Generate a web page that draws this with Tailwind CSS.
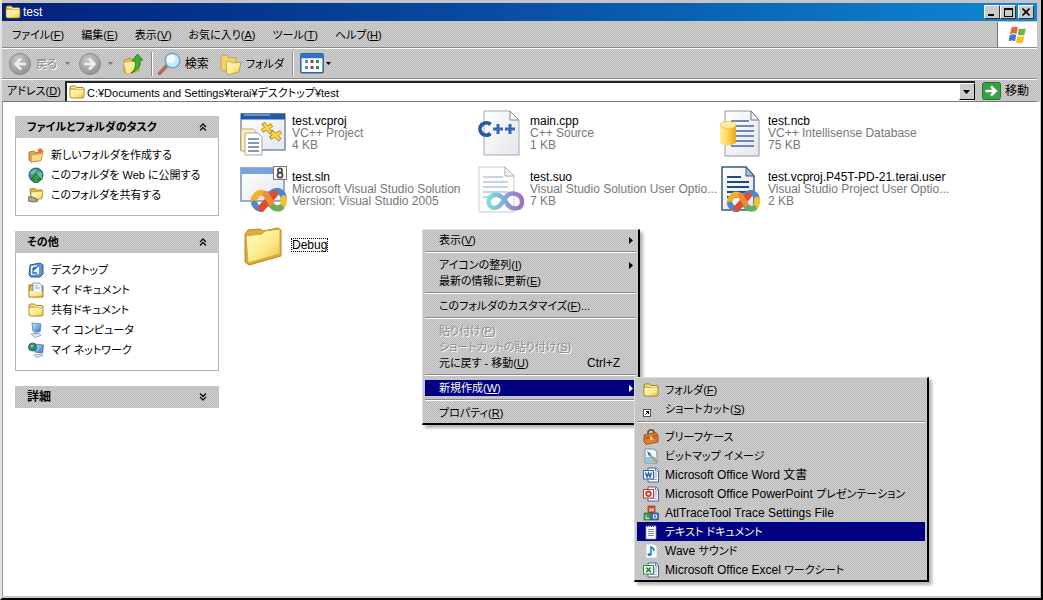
<!DOCTYPE html>
<html lang="ja">
<head>
<meta charset="utf-8">
<title>test</title>
<script src="https://cdn.jsdelivr.net/npm/@tailwindcss/browser@4"></script>
</head>
<body class="min-h-screen flex bg-white text-black text-[12px] leading-[12px] font-['Liberation_Sans','Noto_Sans_CJK_JP',sans-serif] [font-feature-settings:'palt']">

<svg class="absolute w-0 h-0" aria-hidden="true">
  <defs>
    <linearGradient id="gFolder" x1="0" y1="0" x2="1" y2="1"><stop offset="0" stop-color="#fffcc4"/><stop offset=".6" stop-color="#fbe888"/><stop offset="1" stop-color="#e9bf45"/></linearGradient>
    <linearGradient id="gBlue" x1="0" y1="0" x2="1" y2="1"><stop offset="0" stop-color="#d4ecff"/><stop offset="1" stop-color="#2a6fd0"/></linearGradient>
    <radialGradient id="gGrey" cx=".4" cy=".3" r=".8"><stop offset="0" stop-color="#c8c8c8"/><stop offset="1" stop-color="#8c8c8c"/></radialGradient>
    <linearGradient id="gSheet" x1="0" y1="0" x2="1" y2="1"><stop offset="0" stop-color="#ffffff"/><stop offset="1" stop-color="#e4e6ee"/></linearGradient>
    <linearGradient id="gDb" x1="0" y1="0" x2="1" y2="0"><stop offset="0" stop-color="#fff0a0"/><stop offset=".5" stop-color="#ffd44e"/><stop offset="1" stop-color="#e8a520"/></linearGradient>
    <linearGradient id="gInf" x1="0" y1="0" x2="1" y2="0"><stop offset="0" stop-color="#7fdcdc"/><stop offset=".5" stop-color="#84a4dc"/><stop offset="1" stop-color="#a070c0"/></linearGradient>
    <symbol id="folder" viewBox="0 0 16 16"><path d="M1 3.500 2 2h4.500l1.500 1.500h6l1 1V13l-1 1H2l-1-1z" fill="#e2ba45" stroke="#8a6a1c" stroke-width=".8"/><path d="M1.500 6h13v6.800l-.8.8H2.300l-.8-.8z" fill="url(#gFolder)"/><path d="M2 3.200h4l1.500 1.400H14" fill="none" stroke="#fff6b8" stroke-width="1"/></symbol>
    <symbol id="vslogo" viewBox="0 0 36 24"><g fill="none" stroke-width="6" stroke-linecap="round" stroke-linejoin="round"><path d="M15 6q-6-3-9 1-4 4-2 8" stroke="#f4b02c"/><path d="M19 6q6-5 10-2 3 2 3 6" stroke="#4c86d4"/><path d="M4 15q2 5 7 5" stroke="#4c86d4"/><path d="M32 10q1 6-3 9" stroke="#f1c232"/><path d="M29 19q-5 2-9-3" stroke="#68ac60"/><path d="m11 19 12-13" stroke="#e04c30" stroke-width="7"/><path d="m15 6 5 8" stroke="#f08a34"/></g></symbol>
    <symbol id="office" viewBox="0 0 16 16"><path d="M5 1h8l2.500 2.500V15H5z" fill="#fff" stroke="#46639c"/><path d="M12.500 1.500v2.500h2.500" fill="none" stroke="#46639c" stroke-width=".8"/><path d="M11 6h3M11 8h3M11 10h3M7 12.500h7" stroke="#8ba4cc"/><rect x=".5" y="3.500" width="10" height="8.500" fill="#f4f8ff" stroke="currentColor"/></symbol>
    <symbol id="chev" viewBox="0 0 8 8"><path d="m1 4 3-3 3 3M1 7.500l3-3 3 3" fill="none" stroke="#111" stroke-width="1.400"/></symbol>
  </defs>
</svg>

<div class="grow flex flex-col border-l-2 border-r-2 border-b-2 border-l-[#e2e2e2] border-r-black border-b-black">
 <div class="grow flex flex-col pt-[3px] pr-1 pb-[2px] bg-[repeating-conic-gradient(#bcbcbc_0_25%,#cecece_0_50%)] bg-[length:2px_2px]">

  <!-- Title bar -->
  <header class="h-[18px] flex items-center pl-[3px] pr-[3px] text-white bg-linear-to-r from-[#04207c] via-[#0a4fa4] to-[#1088d2]">
    <svg class="w-4 h-4"><use href="#folder"/></svg>
    <h1 class="ml-[2px] grow">test</h1>
    <button aria-label="最小化" class="w-4 h-[14px] bg-[#cbcbcb] border border-t-white border-l-white border-r-[#333] border-b-[#333] flex items-end pl-[3px] pb-[2px]"><span class="w-[6px] h-[2px] bg-black"></span></button>
    <button aria-label="最大化" class="w-4 h-[14px] bg-[#cbcbcb] border border-t-white border-l-white border-r-[#333] border-b-[#333] flex items-center justify-center"><span class="w-[9px] h-[9px] border border-t-2 border-black"></span></button>
    <button aria-label="閉じる" class="ml-[2px] w-4 h-[14px] bg-[#cbcbcb] border border-t-white border-l-white border-r-[#333] border-b-[#333] flex items-center justify-center"><svg class="w-2 h-2" viewBox="0 0 8 8"><path d="m.5.5 7 7m0-7-7 7" stroke="#000" stroke-width="1.600"/></svg></button>
  </header>

  <!-- Menu bar -->
  <nav class="h-[26px] mt-px flex items-center border-b border-[#8a8a8a] pl-[10px]">
    <div class="grow flex gap-[17px] text-[11px]">
      <button>ファイル(<u>F</u>)</button><button>編集(<u>E</u>)</button><button>表示(<u>V</u>)</button><button>お気に入り(<u>A</u>)</button><button>ツール(<u>T</u>)</button><button>ヘルプ(<u>H</u>)</button>
    </div>
    <div class="self-stretch w-10 bg-white border-l border-[#777] flex items-center justify-center">
      <svg class="w-5 h-5" viewBox="0 0 20 20"><path d="M3.500 2.500Q6.500.8 9.800 2.600L8.500 9Q5.500 7.300 2 9z" fill="#e8633a"/><path d="M10.800 3.200q3.200 1.800 7 0L16.500 9.500q-3.200 1.800-6.800.2z" fill="#6cb33f"/><path d="M1.800 10q3.200-1.700 6.500 0L7 16.300Q4 14.700.6 16.300z" fill="#4179d0"/><path d="M9.400 10.800q3.300 1.700 6.900 0L15 17.200q-3.400 1.900-7 0z" fill="#f4c024"/></svg>
    </div>
  </nav>

  <!-- Toolbar -->
  <div class="h-[31px] flex items-center pl-[6px] border-t border-t-white border-b border-b-[#8a8a8a]">
    <button disabled class="flex items-center gap-1 text-[11px] text-[#8c8c8c] [text-shadow:1px_1px_#fff]"><svg class="w-6 h-6" viewBox="0 0 24 24"><circle cx="12" cy="12" r="10.500" fill="url(#gGrey)" stroke="#8a8a8a"/><path d="M18 12H8m5-5.500L7.500 12l5.500 5.500" fill="none" stroke="#eee" stroke-width="2.600"/></svg>戻る</button>
    <svg class="ml-2 w-[5px] h-[3px]" viewBox="0 0 5 3"><path d="M0 0h5L2.500 3z" fill="#777"/></svg>
    <button disabled aria-label="進む" class="ml-2"><svg class="w-6 h-6" viewBox="0 0 24 24"><circle cx="12" cy="12" r="10.500" fill="url(#gGrey)" stroke="#8a8a8a"/><path d="M6 12h10m-5-5.500 5.500 5.500-5.500 5.500" fill="none" stroke="#eee" stroke-width="2.600"/></svg></button>
    <svg class="ml-[6px] w-[5px] h-[3px]" viewBox="0 0 5 3"><path d="M0 0h5L2.500 3z" fill="#777"/></svg>
    <button aria-label="上へ" class="ml-2"><svg class="w-6 h-6" viewBox="0 0 24 24"><path d="m3 8 6-2 2 2 6-1 1 12-12 3-3-2z" fill="#e3bb48" stroke="#b0882a" stroke-width=".7"/><path d="m3 11 12-2 2 10-11 3z" fill="url(#gFolder)"/><path d="M10 21q6-4 4-12h-3l5.500-7L22 8h-3q2 9-9 13z" fill="#3fae35" stroke="#227a1e" stroke-width=".9"/></svg></button>
    <span class="ml-[6px] w-[2px] h-6 bg-[#8c8c8c] border-r border-white"></span>
    <button class="ml-1 flex items-center gap-1"><svg class="w-6 h-6" viewBox="0 0 24 24"><path d="m9.500 14-7 7.500" stroke="#b86a50" stroke-width="3.400" stroke-linecap="round"/><circle cx="15.500" cy="8.500" r="7.300" fill="#c4ecfc" stroke="#6fa8d4" stroke-width="1.500"/><circle cx="14" cy="7" r="4.200" fill="#f2fcff"/></svg>検索</button>
    <button class="ml-[10px] flex items-center gap-[3px] text-[11px]"><svg class="w-6 h-6" viewBox="0 0 24 24"><path d="M2 4.500 4 3l4 .5L10 6l7-.5V16L4 19 2 17z" fill="#f2d36a" stroke="#b8923a" stroke-width=".7"/><path d="m7 10 4-1 2 2 9-1-2 10-12 3z" fill="url(#gFolder)" stroke="#b8923a" stroke-width=".8"/></svg>フォルダ</button>
    <span class="ml-2 w-[2px] h-6 bg-[#8c8c8c] border-r border-white"></span>
    <button aria-label="表示方法" class="ml-[6px] flex items-center gap-[2px]"><svg class="w-6 h-[21px]" viewBox="0 0 24 21"><rect x=".8" y=".8" width="22.400" height="19" rx="1.500" fill="#fbfdff" stroke="#2864a8" stroke-width="1.500"/><path d="M1 3h22" stroke="#2f74c4" stroke-width="4.500"/><path d="M5 8.500h3m-3 6h3" stroke="#5a8cc8" stroke-width="3"/><path d="M10.500 8.500h3m-3 6h3" stroke="#8c4a3c" stroke-width="3"/><path d="M16 8.500h3m-3 6h3" stroke="#2f8858" stroke-width="3"/></svg><svg class="w-[5px] h-[3px]" viewBox="0 0 5 3"><path d="M0 0h5L2.500 3z"/></svg></button>
  </div>

  <!-- Address bar -->
  <form class="h-[23px] flex items-center pl-[5px] border-t border-t-white border-b border-b-[#777]">
    <label for="addr" class="shrink-0 w-[58px] whitespace-nowrap text-[11px]">アドレス(<u>D</u>)</label>
    <div class="grow h-5 flex items-center bg-white border-t-2 border-l-2 border-[#222] pl-[2px]">
      <svg class="shrink-0 w-4 h-4"><use href="#folder"/></svg>
      <input id="addr" value="C:¥Documents and Settings¥terai¥デスクトップ¥test" class="grow min-w-0 h-4 ml-[2px] outline-none bg-transparent text-[11px]">
      <button type="button" aria-label="履歴" class="w-4 h-[17px] bg-[#cbcbcb] border border-t-white border-l-white border-r-black border-b-black flex items-center justify-center"><svg class="w-[7px] h-1" viewBox="0 0 7 4"><path d="M0 0h7L3.500 4z"/></svg></button>
    </div>
    <button type="button" class="ml-[7px] mr-2 flex items-center gap-1"><svg class="w-[19px] h-[18px]" viewBox="0 0 19 18"><rect x=".5" y=".5" width="18" height="17" rx="2" fill="#35a046" stroke="#1f7a30"/><path d="M3.500 9h10M9 4.500 13.800 9 9 13.500" fill="none" stroke="#fff" stroke-width="2.400"/></svg>移動</button>
  </form>

  <!-- Folder contents -->
  <div class="grow -mr-[3px] flex bg-white border-l border-[#999]">
    <aside class="shrink-0 w-[216px] pl-3 pt-[14px] flex flex-col gap-[15px] text-[11px]">
      <section>
        <button class="w-full h-[22px] px-3 flex items-center justify-between font-bold bg-[repeating-conic-gradient(#bcbcbc_0_25%,#cecece_0_50%)] bg-[length:2px_2px]">ファイルとフォルダのタスク<svg class="w-2 h-2"><use href="#chev"/></svg></button>
        <ul class="border border-t-0 border-[#b4b4b4] pl-3 pt-[7px] pb-[10px]">
          <li><a href="#" class="h-5 flex items-center gap-[7px]"><svg class="w-4 h-4" viewBox="0 0 16 16"><path d="m1 5 5-1 1 1.500 6-.5v8L3 15l-2-2z" fill="#eaa83c" stroke="#a86c1c" stroke-width=".8"/><path d="m3 8 12-2-2 7.500L3 15z" fill="#fdd982" stroke="#b87c24" stroke-width=".7"/><path d="m10 1 2 1 2-1 .3 2.200L16 5l-2.200.5L12 7l-.7-2L9 4l1.500-1z" fill="#ee6c38"/></svg>新しいフォルダを作成する</a></li>
          <li><a href="#" class="h-5 flex items-center gap-[7px]"><svg class="w-4 h-4" viewBox="0 0 16 16"><circle cx="8" cy="8" r="7" fill="#3c84b4" stroke="#205a78"/><path d="M3 4q4-3 6-1L7 6 4 8 2 7zM10 4l4 2v5l-3 1-2-4z" fill="#6cc078"/><path d="m8 7 5 5h-3v4H6v-4H3z" fill="#30a838" stroke="#156820" stroke-width=".7"/></svg>このフォルダを Web に公開する</a></li>
          <li><a href="#" class="h-5 flex items-center gap-[7px]"><svg class="w-4 h-4" viewBox="0 0 16 16"><path d="m2 2 5-.5L8.500 3H14v8l-11 2z" fill="#e2b840" stroke="#967420" stroke-width=".8"/><path d="m3 5 12-1-1.500 8L3 13z" fill="url(#gFolder)" stroke="#a8862c" stroke-width=".6"/><path d="M0 10h4l5 2 1 2-4 1-6-1z" fill="#c0a080" stroke="#44506c" stroke-width=".8"/></svg>このフォルダを共有する</a></li>
        </ul>
      </section>
      <section>
        <button class="w-full h-[22px] px-3 flex items-center justify-between font-bold bg-[repeating-conic-gradient(#bcbcbc_0_25%,#cecece_0_50%)] bg-[length:2px_2px]">その他<svg class="w-2 h-2"><use href="#chev"/></svg></button>
        <ul class="border border-t-0 border-[#b4b4b4] pl-3 pt-[7px] pb-[10px]">
          <li><a href="#" class="h-5 flex items-center gap-[7px]"><svg class="w-4 h-4" viewBox="0 0 16 16"><path d="m2 3 10-2 3 2v9l-3 3H3l-2-2z" fill="#5c98d8" stroke="#24589c"/><path d="m3 4 8-1v9l-8 1z" fill="#f4faff"/><path d="M5 6v5h4M5 8.500 11 3M5 6l3-.5" fill="none" stroke="#3068b0" stroke-width="1.300"/></svg>デスクトップ</a></li>
          <li><a href="#" class="h-5 flex items-center gap-[7px]"><svg class="w-4 h-4" viewBox="0 0 16 16"><path d="M1 3h4l1 1h9v11H1z" fill="#e6b43c" stroke="#8c6c24"/><path d="M5 1h6l3 3v8H5z" fill="#f0f8ff" stroke="#5c88c0" stroke-width=".8"/><path d="M7 4h3M7 6h5" stroke="#8cb0dc"/><path d="M1.500 9H6l1 1h7.500v4.500h-13z" fill="url(#gFolder)"/></svg>マイ ドキュメント</a></li>
          <li><a href="#" class="h-5 flex items-center gap-[7px]"><svg class="w-4 h-4"><use href="#folder"/></svg>共有ドキュメント</a></li>
          <li><a href="#" class="h-5 flex items-center gap-[7px]"><svg class="w-4 h-4" viewBox="0 0 16 16"><path d="m4 1 9 1-1 8-7-1z" fill="url(#gBlue)" stroke="#5c88b8" stroke-width=".9"/><path d="m6 10 4 .5v2H6z" fill="#8ca4bc"/><path d="m3 12 8-.5 2 2L7 15.500z" fill="#e4e8ee" stroke="#7c8ca0" stroke-width=".7"/></svg>マイ コンピュータ</a></li>
          <li><a href="#" class="h-5 flex items-center gap-[7px]"><svg class="w-4 h-4" viewBox="0 0 16 16"><path d="m6 2 9.500 1-1 8L7 10z" fill="url(#gBlue)" stroke="#4c78a8" stroke-width=".9"/><path d="m6 13 7-1 2 1.500-6 2z" fill="#dfe6ee" stroke="#7c8ca0" stroke-width=".7"/><circle cx="4.500" cy="5" r="4" fill="#2f8a78" stroke="#1c5468" stroke-width=".8"/><path d="M2 4q2-2 4-1L4 6z" fill="#74cc84"/></svg>マイ ネットワーク</a></li>
        </ul>
      </section>
      <section>
        <button class="w-full h-[22px] px-3 flex items-center justify-between font-bold text-[12px] bg-[repeating-conic-gradient(#bcbcbc_0_25%,#cecece_0_50%)] bg-[length:2px_2px]">詳細<svg class="w-2 h-2 rotate-180"><use href="#chev"/></svg></button>
      </section>
    </aside>

    <main class="grow pl-[21px] pt-[7px]">
      <ul class="grid grid-cols-[repeat(auto-fill,238px)] auto-rows-[48px] gap-y-2 text-[#777] whitespace-nowrap">
        <li class="flex items-center gap-1">
          <svg class="shrink-0 w-12 h-12" viewBox="0 0 48 48"><rect x="1" y="5" width="44" height="36" fill="url(#gSheet)" stroke="#7c8cae" stroke-width="1.500"/><path d="M1 7.500h44" stroke="#2458a4" stroke-width="6"/><path d="M4 6h26" stroke="#78a8e0" stroke-width="1.500"/><path d="m23 14 8 10m1-8-10 6M31 22l9 9m1-8-11 6" stroke="#a87c14" stroke-width="4"/><path d="m23.500 14.500 7 9m1-7-9 5M32 23l7.500 7.500m1-7-9.500 5" stroke="#ffd640" stroke-width="2.600"/><path d="M1 20h12l4 4v18H1z" fill="#fff0b8" stroke="#b8a878"/><path d="M5 24h13l4 4v18H5z" fill="#fff" stroke="#aaa890"/><path d="M8 30h11M8 34h11M8 38h11M8 42h11" stroke="#5c78a8" stroke-width="1.500"/></svg>
          <div><p class="text-black">test.vcproj</p><p>VC++ Project</p><p>4 KB</p></div>
        </li>
        <li class="flex items-center gap-1">
          <svg class="shrink-0 w-12 h-12" viewBox="0 0 48 48"><path d="M6 2h26l9 9v35H6z" fill="url(#gSheet)" stroke="#a8a8b4"/><path d="M32 2v9h9z" fill="#f8f8fa" stroke="#888"/><path d="M12.500 15.500A6.200 6.200 0 1 0 12.500 24.500" fill="none" stroke="#2458a8" stroke-width="3.800"/><path d="M20 15v10m-5-5h10M32 15v10m-5-5h10" stroke="#3468b4" stroke-width="3"/></svg>
          <div><p class="text-black">main.cpp</p><p>C++ Source</p><p>1 KB</p></div>
        </li>
        <li class="flex items-center gap-1">
          <svg class="shrink-0 w-12 h-12" viewBox="0 0 48 48"><path d="M9 2h26l8 9v36H9z" fill="url(#gSheet)" stroke="#8c94a8"/><path d="M35 2v9h8z" fill="#f4f6fa" stroke="#777"/><path d="M15 12h18M15 17h23M15 22h23M15 27h23M15 32h23M15 37h23" stroke="#44689c" stroke-width="1.500"/><path d="M4 16v18q7 5 16 0V16z" fill="url(#gDb)"/><ellipse cx="12" cy="16" rx="8" ry="3.500" fill="#ffee9c" stroke="#e8bc40" stroke-width=".7"/></svg>
          <div><p class="text-black">test.ncb</p><p>VC++ Intellisense Database</p><p>75 KB</p></div>
        </li>
        <li class="flex items-center gap-1">
          <svg class="shrink-0 w-12 h-12" viewBox="0 0 48 48"><rect x="1" y="3" width="43" height="33" fill="url(#gSheet)" stroke="#7c90b8" stroke-width="1.500"/><path d="M1 6h43" stroke="#7ca0dc" stroke-width="6"/><rect x="33.500" y="1.500" width="13" height="13" fill="#fff" stroke="#777"/><circle cx="40" cy="5.500" r="2.100" fill="none" stroke="#444" stroke-width="1.700"/><circle cx="40" cy="10.200" r="2.500" fill="none" stroke="#444" stroke-width="1.700"/><use href="#vslogo" x="10" y="23" width="38" height="25"/></svg>
          <div><p class="text-black">test.sln</p><p>Microsoft Visual Studio Solution</p><p>Version: Visual Studio 2005</p></div>
        </li>
        <li class="flex items-center gap-1">
          <svg class="shrink-0 w-12 h-12" viewBox="0 0 48 48"><path d="M1 2h26l9 9v36H1z" fill="#fdfdfe" stroke="#ccc"/><path d="M27 2v9h9z" fill="#fafafa" stroke="#aaa"/><path d="M5 12h20M5 17h25M5 22h25M5 27h25M5 32h12" stroke="#b0c8dc" stroke-width="1.500"/><path d="M28 37c-4-6-8-8-12-7-7 2-7 12 0 13 8 0 9-9 14-13 5-3 14-1 14 7s-10 8-14 3z" fill="none" stroke="url(#gInf)" stroke-width="4.500"/></svg>
          <div><p class="text-black">test.suo</p><p>Visual Studio Solution User Optio...</p><p>7 KB</p></div>
        </li>
        <li class="flex items-center gap-1">
          <svg class="shrink-0 w-12 h-12" viewBox="0 0 48 48"><path d="M6 2h24l8 9v34H6z" fill="url(#gSheet)" stroke="#3c587c" stroke-width="1.500"/><path d="M30 2v9h8z" fill="#a8bcd8" stroke="#3c587c"/><path d="M11 12h14M11 17h22M11 22h22M11 27h22M11 32h10" stroke="#1c488c" stroke-width="2"/><use href="#vslogo" x="10" y="25" width="35" height="23"/></svg>
          <div><p class="text-black">test.vcproj.P45T-PD-21.terai.user</p><p>Visual Studio Project User Optio...</p><p>2 KB</p></div>
        </li>
        <li class="flex items-center gap-1">
          <svg class="shrink-0 w-12 h-12" viewBox="0 0 48 48"><path d="m5 13 3-4 12-1 3 2 15-3 3 2v26L9 44l-4-3z" fill="#dcae38" stroke="#b08828"/><path d="M6 15 22 13l3-3 15-2v25L8 42z" fill="url(#gFolder)" stroke="#d0a83c"/></svg>
          <p class="-ml-px text-black border border-dotted border-black">Debug</p>
        </li>
      </ul>
    </main>
  </div>
 </div>
</div>

<!-- Context menu -->
<div role="menu" class="absolute left-[422px] top-[229px] w-[218px] p-[2px] text-[11px] border border-l-[#ddd] border-t-[#ddd] border-b-2 border-r-2 border-r-black border-b-black shadow-[3px_3px_3px_rgba(0,0,0,0.3)] bg-[repeating-conic-gradient(#bcbcbc_0_25%,#cecece_0_50%)] bg-[length:2px_2px] flex flex-col">
  <button role="menuitem" class="h-4 pl-[14px] pr-[3px] flex items-center justify-between"><span>表示(<u>V</u>)</span><svg class="w-1 h-[7px]" viewBox="0 0 4 7"><path d="M0 0v7l4-3.500z"/></svg></button>
  <hr class="my-[3px] h-[3px] border-0 border-t border-[#8a8a8a] bg-linear-to-b from-white from-33% to-transparent to-34%">
  <button role="menuitem" class="h-4 pl-[14px] pr-[3px] flex items-center justify-between"><span>アイコンの整列(<u>I</u>)</span><svg class="w-1 h-[7px]" viewBox="0 0 4 7"><path d="M0 0v7l4-3.500z"/></svg></button>
  <button role="menuitem" class="h-4 pl-[14px] text-left">最新の情報に更新(<u>E</u>)</button>
  <hr class="my-[3px] h-[3px] border-0 border-t border-[#8a8a8a] bg-linear-to-b from-white from-33% to-transparent to-34%">
  <button role="menuitem" class="h-4 pl-[14px] text-left">このフォルダのカスタマイズ(<u>F</u>)...</button>
  <hr class="my-[3px] h-[3px] border-0 border-t border-[#8a8a8a] bg-linear-to-b from-white from-33% to-transparent to-34%">
  <button role="menuitem" disabled class="h-4 pl-[14px] text-left text-[#8c8c8c] [text-shadow:1px_1px_#fff]">貼り付け(<u>P</u>)</button>
  <button role="menuitem" disabled class="h-4 pl-[14px] text-left text-[#8c8c8c] [text-shadow:1px_1px_#fff]">ショートカットの貼り付け(<u>S</u>)</button>
  <button role="menuitem" class="h-4 pl-[14px] pr-4 flex items-center justify-between"><span>元に戻す - 移動(<u>U</u>)</span><span class="text-[12px]">Ctrl+Z</span></button>
  <hr class="my-[3px] h-[3px] border-0 border-t border-[#8a8a8a] bg-linear-to-b from-white from-33% to-transparent to-34%">
  <button role="menuitem" class="h-4 pl-[14px] pr-[3px] flex items-center justify-between bg-[#000080] text-white"><span>新規作成(<u>W</u>)</span><svg class="w-1 h-[7px]" viewBox="0 0 4 7"><path d="M0 0v7l4-3.500z" fill="#fff"/></svg></button>
  <hr class="my-[3px] h-[3px] border-0 border-t border-[#8a8a8a] bg-linear-to-b from-white from-33% to-transparent to-34%">
  <button role="menuitem" class="h-4 pl-[14px] text-left">プロパティ(<u>R</u>)</button>
</div>

<!-- "New" submenu -->
<div role="menu" class="absolute left-[634px] top-[377px] w-[295px] p-[2px] pb-px border border-l-[#ddd] border-t-[#ddd] border-b-2 border-r-2 border-r-black border-b-black shadow-[3px_3px_3px_rgba(0,0,0,0.3)] bg-[repeating-conic-gradient(#bcbcbc_0_25%,#cecece_0_50%)] bg-[length:2px_2px] flex flex-col">
  <button role="menuitem" class="h-[19px] pl-[6px] flex items-center gap-[6px] text-[11px]"><svg class="w-4 h-4"><use href="#folder"/></svg><span>フォルダ(<u>F</u>)</span></button>
  <button role="menuitem" class="h-[19px] pl-[6px] flex items-center gap-[6px] text-[11px]"><svg class="w-4 h-4" viewBox="0 0 16 16"><rect x=".5" y="8.500" width="7" height="7" fill="#fff" stroke="#555"/><path d="M2.500 13.500 5.500 10.500M3 10.500h2.500V13" fill="none" stroke="#000"/></svg><span>ショートカット(<u>S</u>)</span></button>
  <hr class="my-[3px] h-[3px] border-0 border-t border-[#8a8a8a] bg-linear-to-b from-white from-33% to-transparent to-34%">
  <button role="menuitem" class="h-[19px] pl-[6px] flex items-center gap-[6px] text-[11px]"><svg class="w-4 h-4" viewBox="0 0 16 16"><path d="M5 5V2.500L6.500 1h3L11 2.500V4" fill="none" stroke="#703c18" stroke-width="1.500"/><path d="m1 6 12-2.500L15 6v7L3 15.500 1 13z" fill="#e47c2c" stroke="#8c4414" stroke-width=".8"/><path d="m1 6 2 2.500L15 6M1.500 10l12-2" fill="none" stroke="#b0541c"/><rect x="7" y="7.500" width="2.500" height="3.500" fill="#ffd888"/></svg>ブリーフケース</button>
  <button role="menuitem" class="h-[19px] pl-[6px] flex items-center gap-[6px] text-[11px]"><svg class="w-4 h-4" viewBox="0 0 16 16"><path d="M2 1h9l3 3v11H2z" fill="#e8f6ff" stroke="#78909c"/><path d="M3 9h10v5H3z" fill="#88c8e8"/><path d="m6 6 8 8" stroke="#c89c50" stroke-width="2"/><path d="m4 3 4 3-2 2z" fill="#3058a8"/></svg>ビットマップ イメージ</button>
  <button role="menuitem" class="h-[19px] pl-[6px] flex items-center gap-[6px]"><svg class="w-4 h-4 text-[#3464b0]" viewBox="0 0 16 16"><use href="#office"/><path d="m2.500 5.500 1.500 4.500 1.500-4 1.500 4L8.500 5.500" fill="none" stroke="#2858a8" stroke-width="1.400"/></svg>Microsoft Office Word 文書</button>
  <button role="menuitem" class="h-[19px] pl-[6px] flex items-center gap-[6px]"><svg class="w-4 h-4 text-[#c83c28]" viewBox="0 0 16 16"><use href="#office"/><circle cx="5.500" cy="7.800" r="2.300" fill="#fff" stroke="#cc3c24" stroke-width="1.800"/></svg><span>Microsoft Office PowerPoint <span class="text-[11px]">プレゼンテーション</span></span></button>
  <button role="menuitem" class="h-[19px] pl-[6px] flex items-center gap-[6px]"><svg class="w-4 h-4" viewBox="0 0 16 16"><rect x="5" y="1" width="7" height="7" fill="#dc4c34" stroke="#8c2c1c" stroke-width=".6"/><rect x="1" y="8" width="7" height="7" fill="#38a050" stroke="#1c6430" stroke-width=".6"/><rect x="8.500" y="8" width="7" height="7" fill="#4074cc" stroke="#204488" stroke-width=".6"/><path d="M7 3v3.500M10 3v3.500M7 5h3M3 10.500v3h3M10.500 10h3v3h-3z" fill="none" stroke="#f8e8e0"/></svg>AtlTraceTool Trace Settings File</button>
  <button role="menuitem" class="h-[19px] pl-[6px] flex items-center gap-[6px] text-[11px] bg-[#000080] text-white"><svg class="w-4 h-4" viewBox="0 0 16 16"><path d="M3 2h10v13H3z" fill="#fff" stroke="#8898b8" stroke-width=".8"/><path d="M4 2h8" stroke="#445" stroke-width="2" stroke-dasharray="1 1"/><path d="M5 5.500h6M5 7.500h6M5 9.500h6M5 11.500h6" stroke="#8088a0"/></svg>テキスト ドキュメント</button>
  <button role="menuitem" class="h-[19px] pl-[6px] flex items-center gap-[6px]"><svg class="w-4 h-4" viewBox="0 0 16 16"><path d="M3 1h8l3 3v11H3z" fill="#fff" stroke="#b8c8d4" stroke-width=".8"/><path d="M8 11.500V4q3 1 3 4" fill="none" stroke="#2478b8" stroke-width="1.500"/><ellipse cx="6.500" cy="11.500" rx="2" ry="1.500" fill="#2478b8"/></svg><span>Wave <span class="text-[11px]">サウンド</span></span></button>
  <button role="menuitem" class="h-[19px] pl-[6px] flex items-center gap-[6px]"><svg class="w-4 h-4 text-[#2c8c3c]" viewBox="0 0 16 16"><use href="#office"/><path d="m3.200 5.500 4.600 4.600m0-4.600-4.600 4.600" stroke="#208030" stroke-width="1.500"/></svg><span>Microsoft Office Excel <span class="text-[11px]">ワークシート</span></span></button>
</div>
</body>
</html>
